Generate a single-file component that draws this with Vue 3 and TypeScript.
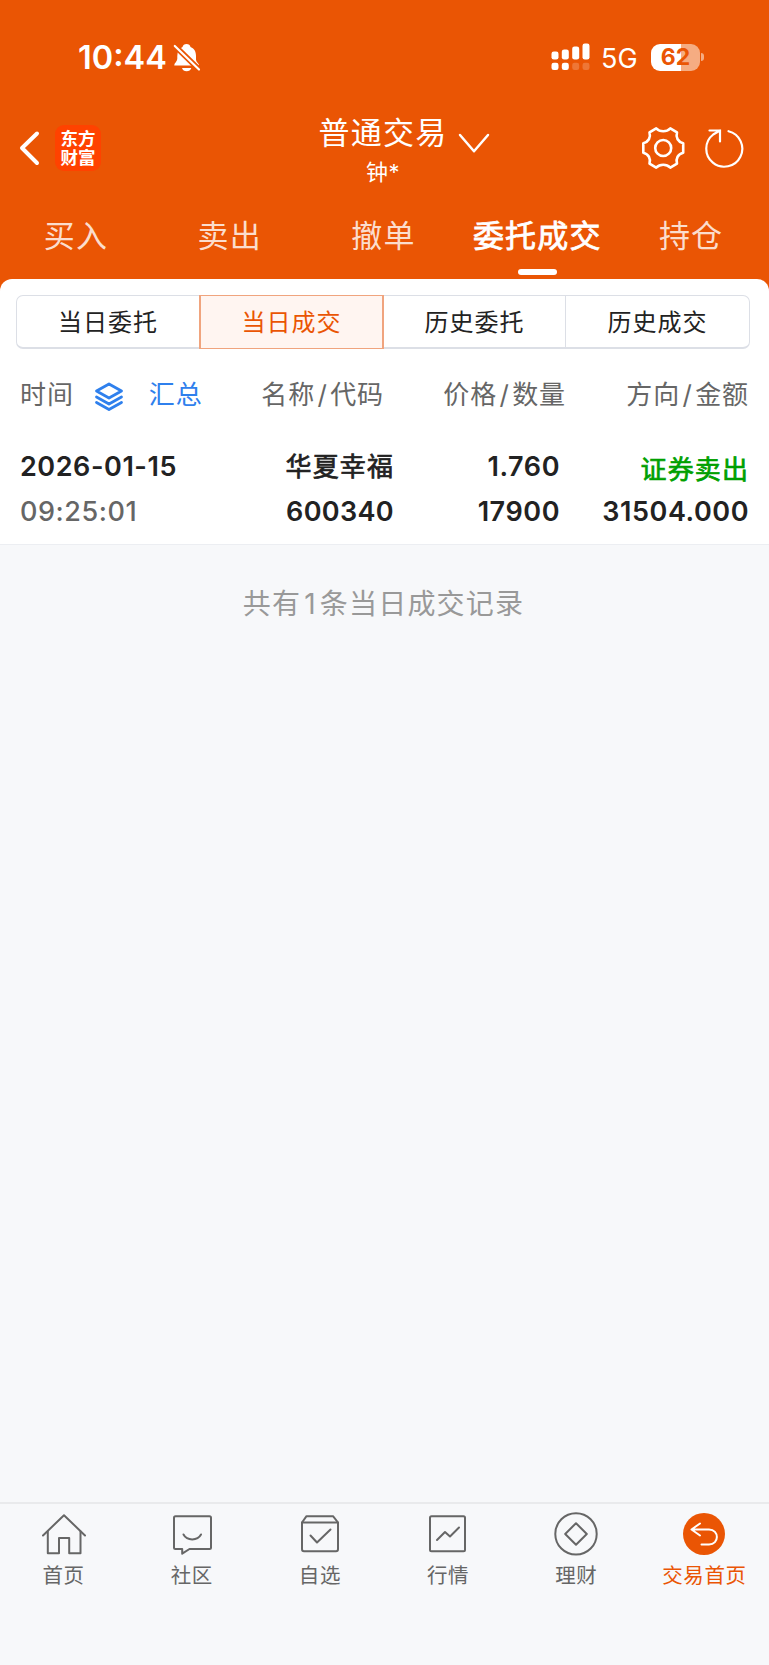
<script setup lang="ts">
interface Tab {
  label: string
  active?: boolean
}

const tabs: Tab[] = [
  { label: '买入' },
  { label: '卖出' },
  { label: '撤单' },
  { label: '委托成交', active: true },
  { label: '持仓' },
]

const segments: Tab[] = [
  { label: '当日委托' },
  { label: '当日成交', active: true },
  { label: '历史委托' },
  { label: '历史成交' },
]

interface Deal {
  date: string
  time: string
  name: string
  code: string
  price: string
  amount: string
  side: string
  total: string
}

const deals: Deal[] = [
  {
    date: '2026-01-15',
    time: '09:25:01',
    name: '华夏幸福',
    code: '600340',
    price: '1.760',
    amount: '17900',
    side: '证券卖出',
    total: '31504.000',
  },
]

interface NavItem {
  label: string
  paths: string[]
}

const navItems: NavItem[] = [
  { label: '首页', paths: ['M2 23.500 23 3.200 44 23.500', 'M6.800 19.500V41.200H18V26H28.200V41.200H39.500V19.500'] },
  { label: '社区', paths: ['M6.500 4.200H40.500Q42 4.200 42 5.700V35.500Q42 37 40.500 37H20.500L13.200 41.600V37H6.500Q5 37 5 35.500V5.700Q5 4.200 6.500 4.200Z', 'M14.500 22.500C18 29 28.500 29 32 22.500'] },
  { label: '自选', paths: ['M5 10.500 9.500 4.200H36L41 10.500V37Q41 39.200 39 39.200H7Q5 39.200 5 37Z', 'M5 10.500H41', 'M13.500 23.500 20 30.500 33.500 17.500'] },
  { label: '行情', paths: ['M6.500 4.200H38.500Q40 4.200 40 5.700V37.700Q40 39.200 38.500 39.200H6.500Q5 39.200 5 37.700V5.700Q5 4.200 6.500 4.200Z', 'M12 28 20 20 25 24.500 34 15.500'] },
  { label: '理财', paths: ['M23 1.200A20.700 20.700 0 1 1 23 42.600A20.700 20.700 0 1 1 23 1.200Z', 'M23 11.200 33.800 22 23 32.800 12.200 22Z'] },
]
</script>

<template>
  <div class="screen">
    <header class="top">
      <div class="status">
        <span class="clock">10:44</span>
        <svg class="bell" width="28" height="30" viewBox="0 0 28 30">
          <path fill="#fff" d="M13.500 1C15.700 1 17.200 2.200 17.500 4C21.600 5.600 23 9 23 13V16.500C23.300 19.500 26 20.300 26 22.500H1.300C1.300 20 4 19 4.300 15.500V13C4.300 9 6 5.500 9.500 4C10 2.200 11.300 1 13.500 1ZM9 25H18.300C17.500 27.300 16 28.300 13.600 28.300C11.300 28.300 9.700 27.300 9 25Z" />
          <path stroke="#ea5504" stroke-width="5.500" d="M1.500 2.500 26.500 27" />
          <path stroke="#fff" stroke-width="2.200" stroke-linecap="round" d="M1.800 3 26 26.500" />
        </svg>
        <svg class="signal" width="39" height="28" viewBox="0 0 39 28">
          <g fill="#fff">
            <rect x="0.500" y="8.500" width="7" height="8" rx="2.300" />
            <rect x="10.800" y="6.500" width="7" height="10" rx="2.300" />
            <rect x="21.200" y="3.500" width="7" height="13" rx="2.300" />
            <rect x="31.500" y="0.500" width="7" height="16" rx="2.300" />
            <rect x="0.500" y="19.700" width="7" height="7.300" rx="2.300" />
            <rect x="10.800" y="19.700" width="7" height="7.300" rx="2.300" />
            <rect x="21.200" y="19.700" width="7" height="7.300" rx="2.300" opacity="0.200" />
            <rect x="31.500" y="19.700" width="7" height="7.300" rx="2.300" opacity="0.200" />
          </g>
        </svg>
        <span class="network">5G</span>
        <span class="battery">62</span>
        <i class="battery-tip"></i>
      </div>

      <div class="titlebar">
        <svg class="back" width="22" height="36" viewBox="0 0 22 36">
          <path fill="none" stroke="#fff" stroke-width="4" stroke-linecap="round" stroke-linejoin="round" d="M19 3.500 4 18 19 33" />
        </svg>
        <div class="logo">东方<br>财富</div>
        <div class="title">
          <div class="account">普通交易</div>
          <div class="owner">钟*</div>
        </div>
        <svg class="chevron" width="32" height="22" viewBox="0 0 32 22">
          <path fill="none" stroke="#fff" stroke-width="2.500" stroke-linecap="round" stroke-linejoin="round" d="M2 2 16 18.300 30 2" />
        </svg>
        <svg class="gear" width="44" height="44" viewBox="0 0 44 44" fill="none" stroke="#fff" stroke-width="2.600" stroke-linejoin="round">
          <path d="M15.200 2.300C19 6.200 25.500 6.200 29.300 2.300L36 6.300C34.500 11.500 37 16 42.200 17.200V26.800C37 28 34.500 32.500 36 37.700L29.300 41.700C25.500 37.800 19 37.800 15.200 41.700L8.500 37.700C10 32.500 7.500 28 2.300 26.800V17.200C7.500 16 10 11.500 8.500 6.300Z" />
          <circle cx="22.200" cy="22" r="8" />
        </svg>
        <svg class="reload" width="40" height="40" viewBox="0 0 40 40" fill="none" stroke="#fff" stroke-width="2.200" stroke-linecap="round">
          <path d="M23.500 3.200A18 18 0 1 1 8.200 6.500L15 2.500M4.500 2.500H15V13.500" />
        </svg>
      </div>

      <nav class="tabs">
        <div v-for="tab in tabs" :key="tab.label" class="tab" :class="{ active: tab.active }">
          {{ tab.label }}
        </div>
      </nav>
    </header>

    <main class="card">
      <div class="segments">
        <div v-for="item in segments" :key="item.label" class="segment" :class="{ active: item.active }">
          {{ item.label }}
        </div>
      </div>

      <div class="row head">
        <div class="first">
          <span>时间</span>
          <svg class="layers" width="30" height="30" viewBox="0 0 30 30" fill="none" stroke="#2f80ed" stroke-width="2.800" stroke-linejoin="round" stroke-linecap="round">
            <path d="M15 2 27.500 9 15 16 2.500 9ZM2.500 15 15 22 27.500 15M2.500 20.500 15 27.500 27.500 20.500" />
          </svg>
          <span class="link">汇总</span>
        </div>
        <div class="name">名称<span class="slash">/</span>代码</div>
        <div class="price">价格<span class="slash">/</span>数量</div>
        <div class="side">方向<span class="slash">/</span>金额</div>
      </div>

      <div v-for="deal in deals" :key="deal.code" class="row deal">
        <div class="first">
          <div>{{ deal.date }}</div>
          <div class="muted">{{ deal.time }}</div>
        </div>
        <div class="name">
          <div class="cjk">{{ deal.name }}</div>
          <div>{{ deal.code }}</div>
        </div>
        <div class="price">
          <div>{{ deal.price }}</div>
          <div>{{ deal.amount }}</div>
        </div>
        <div class="side">
          <div class="cjk sell">{{ deal.side }}</div>
          <div>{{ deal.total }}</div>
        </div>
      </div>
    </main>

    <p class="summary">共有<span class="count">1</span>条当日成交记录</p>

    <footer class="bottom">
      <div v-for="item in navItems" :key="item.label" class="nav-item">
        <svg width="46" height="44" viewBox="0 0 46 44" fill="none" stroke="#666" stroke-width="2" stroke-linejoin="round" stroke-linecap="round">
          <path v-for="d in item.paths" :key="d" :d="d" />
        </svg>
        <span>{{ item.label }}</span>
      </div>
      <div class="nav-item current">
        <svg width="46" height="44" viewBox="0 0 46 44">
          <circle cx="23" cy="22" r="21" fill="#ea5504" />
          <path fill="none" stroke="#fff" stroke-width="2" stroke-linecap="round" stroke-linejoin="round" d="M19 11.500 10.500 17.500 19 23.500M10.500 17.500H28C38.500 17.500 38.500 32.500 28 32.500H20.500" />
        </svg>
        <span>交易首页</span>
      </div>
    </footer>
  </div>
</template>

<style>
body {
  margin: 0;
  background: #f7f8fa;
}
</style>

<style scoped>
.screen {
  display: flex;
  flex-direction: column;
  width: 769px;
  height: 1665px;
  overflow: hidden;
  background: #f7f8fa;
  font-family: Inter, "Noto Sans CJK SC", sans-serif;
  color: #222;
  white-space: nowrap;
}
.screen svg {
  display: block;
  flex: none;
}
.top {
  flex: none;
  height: 291px;
  background: #ea5504;
  color: #fff;
}
.status {
  display: flex;
  align-items: center;
  height: 116px;
  box-sizing: border-box;
}
.clock {
  width: 94px;
  margin-left: 78px;
  font-size: 32.500px;
  font-weight: 600;
  line-height: 40px;
}
.bell {
  margin-left: 1px;
}
.signal {
  margin: -2px 0 0 350px;
}
.network {
  width: 36px;
  margin: 1px 0 0 11px;
  font-size: 27px;
  line-height: 32px;
}
.battery {
  width: 49px;
  height: 27px;
  margin: -2px 0 0 14px;
  border-radius: 9px;
  background: linear-gradient(90deg, #fff 62%, #f5ac82 62%);
  color: #ea5504;
  font-size: 23px;
  font-weight: 700;
  line-height: 27px;
  text-align: center;
}
.battery-tip {
  width: 3px;
  height: 8px;
  margin: -2px 0 0 1px;
  border-radius: 0 4px 4px 0;
  background: #f5ac82;
}
.titlebar {
  display: flex;
  align-items: center;
  height: 64px;
}
.back {
  margin-left: 18px;
}
.logo {
  width: 46px;
  height: 46px;
  margin: -1px 0 0 15px;
  padding-top: 3px;
  border-radius: 9px;
  box-sizing: border-box;
  background: #ff4200;
  font-family: "Noto Sans CJK SC", sans-serif;
  font-size: 17.500px;
  font-weight: 700;
  line-height: 19px;
  text-align: center;
}
.title {
  width: 130px;
  margin: 4px 0 0 217px;
  text-align: center;
}
.account {
  font-size: 31px;
  letter-spacing: 1.300px;
  line-height: 40px;
}
.owner {
  margin: 3px 0 0;
  font-size: 22px;
  letter-spacing: 0.500px;
  line-height: 32px;
}
.chevron {
  margin: -8px 0 0 10px;
}
.gear {
  margin-left: 151px;
}
.reload {
  margin-left: 20px;
}
.tabs {
  display: flex;
  height: 99px;
}
.tab {
  display: flex;
  flex: 1;
  flex-direction: column;
  align-items: center;
  padding: 36px 2px 0 0;
  font-size: 31px;
  letter-spacing: 1.200px;
  line-height: 40px;
  color: #fbddcd;
}
.tab.active {
  color: #fff;
  -webkit-text-stroke: 0.800px #fff;
}
.tab.active::after {
  content: "";
  width: 39px;
  height: 6px;
  margin-top: 13px;
  border-radius: 3px;
  background: #fff;
}
.card {
  flex: none;
  height: 266px;
  margin-top: -12px;
  border-bottom: 1px solid #eceef2;
  border-radius: 12px 12px 0 0;
  box-sizing: border-box;
  background: #fff;
}
.segments {
  display: grid;
  grid-template-columns: 183px 184px 182px 183px;
  width: 734px;
  height: 54px;
  margin: 16px 0 0 16px;
  border: 1px solid #dcdfe6;
  border-bottom-width: 2px;
  border-radius: 7px;
  box-sizing: border-box;
}
.segment {
  border-right: 1px solid #dcdfe6;
  font-size: 24px;
  letter-spacing: 1px;
  line-height: 53px;
  text-align: center;
}
.segment:last-child {
  border-right: 0;
}
.segment.active {
  height: 52px;
  margin: -1px 0 0 -1px;
  border: 1px solid #f0a47e;
  border-width: 1px 2px;
  line-height: 53px;
  background: #fff5f1;
  color: #ea5504;
}
.row {
  display: grid;
  grid-template-columns: 240px 1fr 172px 183px;
  padding: 0 20px;
  text-align: right;
}
.first {
  text-align: left;
}
.head {
  margin-top: 26px;
  font-size: 26px;
  letter-spacing: 0.900px;
  line-height: 40px;
  color: #666;
}
.head .name {
  padding-right: 10px;
}
.slash {
  margin: 0 2.400px;
}
.head .first {
  display: flex;
  align-items: center;
}
.layers {
  margin: 4px 25px 0 20px;
}
.link {
  color: #2f80ed;
}
.deal {
  margin-top: 29px;
  font-size: 27px;
  font-weight: 600;
  letter-spacing: 0.550px;
  line-height: 45px;
}
.deal .price {
  padding-right: 6px;
}
.deal .name > div:last-child {
  letter-spacing: 0.350px;
}
.cjk {
  font-size: 26px;
  font-weight: 400;
  letter-spacing: 1.100px;
  -webkit-text-stroke: 0.700px currentColor;
}
.muted {
  color: #666;
  font-weight: 500;
}
.sell {
  height: 42px;
  padding-top: 3px;
  color: #00a000;
}
.summary {
  flex: 1;
  margin: 39px 2px 0 0;
  font-size: 28px;
  letter-spacing: 1.200px;
  line-height: 40px;
  text-align: center;
  color: #999;
}
.count {
  margin: 0 3px;
}
.bottom {
  display: flex;
  flex: none;
  height: 163px;
  border-top: 2px solid #e9eaec;
  box-sizing: border-box;
}
.nav-item {
  display: flex;
  flex: 1;
  flex-direction: column;
  align-items: center;
  padding: 8px 1px 0 0;
  font-size: 20.500px;
  letter-spacing: 0.600px;
  line-height: 40px;
  color: #666;
}
.current {
  color: #ea5504;
}
</style>
